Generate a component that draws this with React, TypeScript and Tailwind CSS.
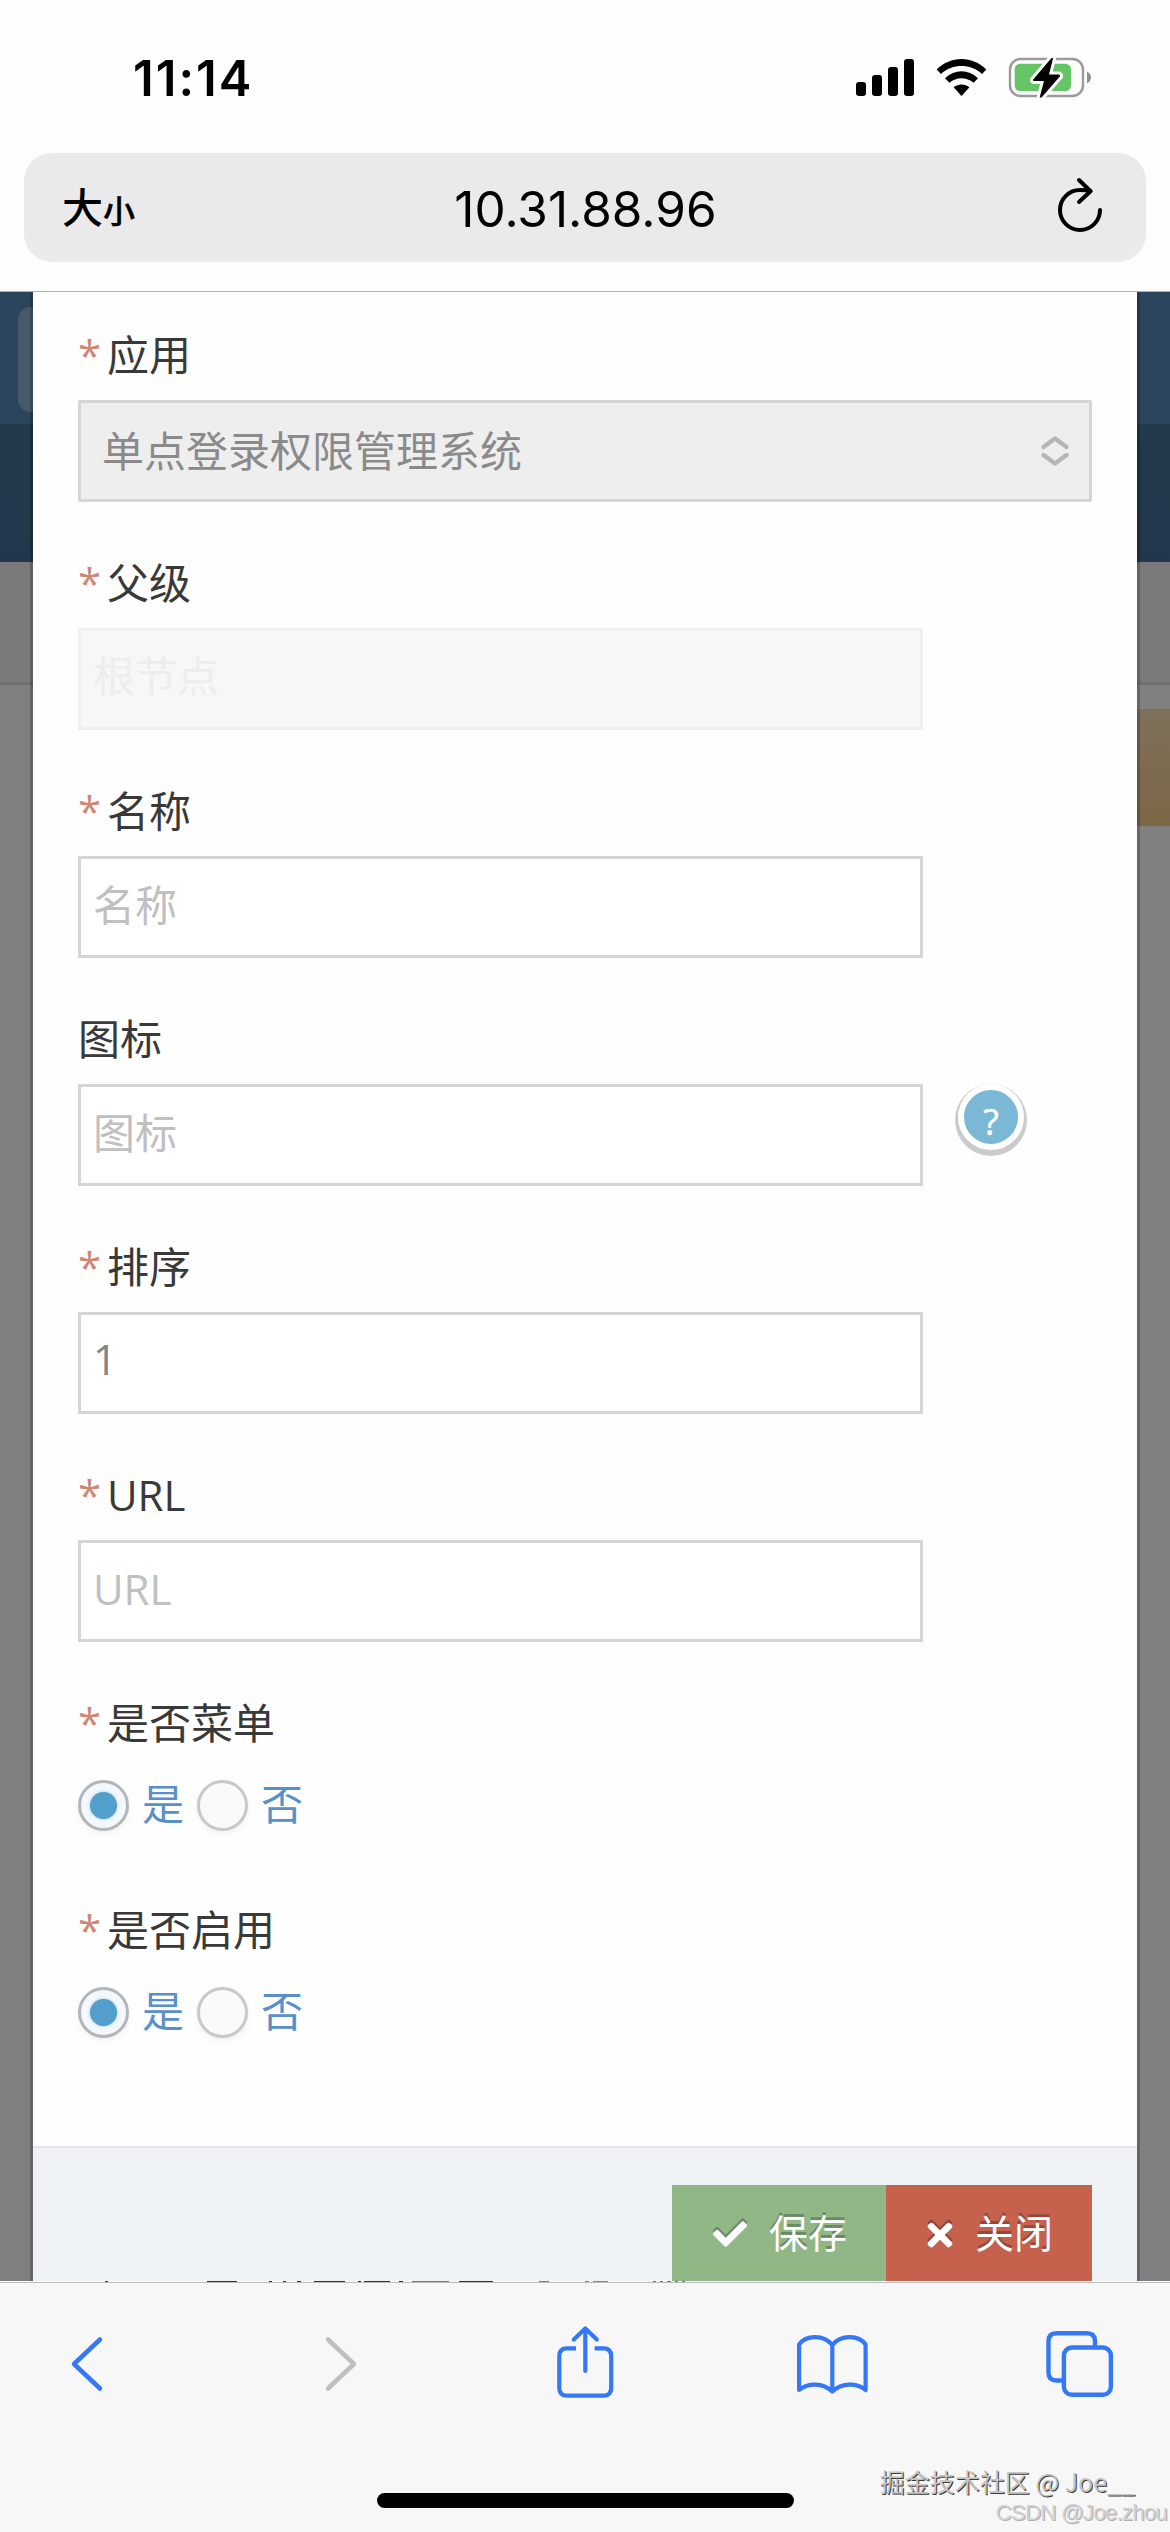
import type { ReactNode } from "react";
import { FaCheck, FaTimes } from "react-icons/fa";

function StatusBar() {
  return (
    <div className="flex h-[153px] shrink-0 items-start justify-between pt-[49px] pr-[78px] pl-[133px]">
      <span className="font-['Inter',sans-serif] text-[49px] leading-[60px] font-semibold tracking-[2px] text-black">
        11:14
      </span>
      <svg width="240" height="48" viewBox="852 54 240 48" className="mt-[5px] block">
        {/* signal */}
        <rect x="856" y="82" width="10" height="14" rx="3" />
        <rect x="872" y="75" width="10" height="21" rx="3" />
        <rect x="888" y="67" width="10" height="29" rx="3" />
        <rect x="904" y="59" width="10" height="37" rx="3" />
        {/* wifi */}
        <path d="M936.7 69.6C950.5 55.6 972.5 55.6 986.3 69.6L982 74C970.5 63.4 952.5 63.4 941 74Z" />
        <path d="M945 78.2C954.5 69 968.5 69 978 78.2L973.6 82.8C966.5 76.6 956.5 76.6 949.4 82.8Z" />
        <path d="M953.6 87.2C958 83.6 965 83.6 969.4 87.2L961.5 96Z" />
        {/* battery */}
        <rect x="1010" y="59" width="73" height="37" rx="10.5" fill="none" stroke="#9b9b9b" strokeWidth="2.4" />
        <path d="M1087 71.5C1092.3 74 1092.3 81 1087 83.5Z" fill="#8f8f8f" />
        <rect x="1014.7" y="63.7" width="56.3" height="27.3" rx="5.5" fill="#65c466" />
        <path
          d="M1051.5 58L1033 79.7Q1032.5 81 1034.5 81H1044L1039.7 97.2Q1040.5 98 1042 97L1060 76.3Q1060.3 74.6 1058.5 74.5H1049L1053 58.5Q1052.6 57.4 1051.5 58Z"
          fill="#000"
          stroke="#fdfdfd"
          strokeWidth="6"
          paintOrder="stroke"
        />
      </svg>
    </div>
  );
}

function AddressBar() {
  return (
    <div className="mx-[24px] flex h-[109px] shrink-0 items-center justify-between rounded-[28px] bg-[#eaeaea] pr-[42px] pl-[38px] text-black">
      <span className="flex w-[125px] items-baseline pb-[2px] font-['Noto_Sans_CJK_SC',sans-serif] font-medium">
        <span className="text-[41px] leading-[60px]">大</span>
        <span className="text-[32px] leading-[60px] [-webkit-text-stroke:0.4px_#000]">小</span>
      </span>
      <span className="pt-[2px] font-['Inter',sans-serif] text-[49.5px] leading-[60px]">10.31.88.96</span>
      <span className="flex w-[120px] justify-end pb-[3px]">
        <svg width="50" height="60" viewBox="1054 176 50 60" fill="none" stroke="#000" strokeWidth="4" strokeLinecap="round" strokeLinejoin="round">
          <path d="M1100 210A20 20 0 1 1 1080 190Q1086 190 1090.5 191" />
          <path d="M1079 180L1090.5 191.2L1079 202" />
        </svg>
      </span>
    </div>
  );
}

function Label({ text, required = true }: { text: string; required?: boolean }) {
  return (
    <div className="flex h-[60px] items-center text-[42px] leading-[60px] text-[#393939]">
      {required && <span className="w-[29px] text-[#cc8775]">*</span>}
      <span>{text}</span>
    </div>
  );
}

type FieldProps = {
  label: string;
  text: string;
  required?: boolean;
  box?: string;
  extra?: ReactNode;
};

function Field({ label, text, required, box = "border-[#d5d5d5] bg-white pb-[4px] text-[#c0c0c0]", extra }: FieldProps) {
  return (
    <div className="mb-[51px]">
      <Label text={label} required={required} />
      <div className="mt-[15px] flex items-start">
        <div className={`flex h-[102px] w-[845px] items-center border-3 pl-[12px] text-[42px] leading-[60px] ${box}`}>
          {text}
        </div>
        {extra}
      </div>
    </div>
  );
}

function HelpButton() {
  return (
    <span className="ml-[35px] flex size-[66px] items-center justify-center rounded-full border-6 border-white bg-[#7ab8d6] pt-[9px] text-[36px] leading-none text-white shadow-[0_3px_0_3px_rgba(0,0,0,0.2)] [-webkit-text-stroke:0.5px_#fff]">
      ?
    </span>
  );
}

function Radio({ text, checked = false }: { text: string; checked?: boolean }) {
  return (
    <div className="flex h-[51px] w-[119px] items-center">
      <span
        className={`flex size-[51px] items-center justify-center rounded-full border-3 shadow-[0_3px_6px_rgba(0,0,0,0.05)] ${
          checked ? "border-[#b2b6b9] bg-[#f3f8fc]" : "border-[#c8c8c8] bg-[#fafafa]"
        }`}
      >
        {checked && <span className="size-[27px] rounded-full bg-[#519fca] shadow-[0_0_3px_#8cc4e2]" />}
      </span>
      <span className="ml-[13px] pb-[5px] text-[42px] leading-[51px] text-[#5a90c8]">{text}</span>
    </div>
  );
}

function RadioField({ label }: { label: string }) {
  return (
    <div className="mb-[69px]">
      <Label text={label} />
      <div className="mt-[27px] flex">
        <Radio text="是" checked />
        <Radio text="否" />
      </div>
    </div>
  );
}

// Dimmed page that stays visible on both sides of the dialog
function Backdrop({ side }: { side: "left" | "right" }) {
  const left = side === "left";
  return (
    <div className="flex w-[33px] flex-col overflow-hidden bg-[#808080]">
      <div className={`h-[132px] shrink-0 bg-[#2b465c] ${left ? "pt-[15px] pl-[18px]" : ""}`}>
        {left && <div className="h-[105px] rounded-l-[13px] bg-[#465a6b]" />}
      </div>
      <div className="h-[138px] shrink-0 bg-linear-to-b from-[#223a4a] to-[#22374d]" />
      <div className="h-[123px] shrink-0 border-b-3 border-[#707070] bg-[#7a7a7a]" />
      {!left && <div className="mt-[24px] h-[117px] shrink-0 bg-linear-to-b from-[#7e705b] to-[#7c6746]" />}
    </div>
  );
}

function ModalForm() {
  return (
    <div className="relative flex flex-1 flex-col bg-[#fefefe] shadow-[0_0_0_3px_rgba(0,0,0,0.2)]">
      <div className="flex h-[1854px] flex-col pt-[33px] pl-[45px]">
        <div className="mb-[51px]">
          <Label text="应用" />
          <div className="mt-[15px] flex h-[102px] w-[1014px] items-center justify-between rounded-[2px] border-3 border-[#d5d5d5] bg-[#eee] pr-[19px] pl-[21px] text-[42px] leading-[60px] text-[#8a8a8a]">
            单点登录权限管理系统
            <svg width="30" height="34" viewBox="0 0 30 34" fill="none" stroke="#b5b5b5" strokeWidth="4.4" strokeLinecap="round" strokeLinejoin="round">
              <path d="M3.5 13L15 4.5L26.5 13M3.5 21L15 29.5L26.5 21" />
            </svg>
          </div>
        </div>
        <Field label="父级" text="根节点" box="border-[#f0f0f0] bg-[#f7f7f7] pb-[6px] text-[#ededed]" />
        <Field label="名称" text="名称" />
        <Field label="图标" text="图标" required={false} extra={<HelpButton />} />
        <Field label="排序" text="1" box="border-[#d5d5d5] bg-white pb-[8px] text-[#858585]" />
        <Field label="URL" text="URL" />
        <RadioField label="是否菜单" />
        <RadioField label="是否启用" />
      </div>
      <div className="flex flex-1 justify-end border-t-2 border-[#e4e7ea] bg-[#eff3f6] pt-[37px] pr-[45px] text-[39px] text-white [text-shadow:0_-3px_0_rgba(0,0,0,0.25)]">
        <div className="flex w-[214px] bg-[#91b787] pt-[18px] pl-[41px] leading-[60px]">
          <FaCheck className="mt-[14px] size-[34px] drop-shadow-[0_-3px_0_rgba(0,0,0,0.25)]" />
          <span className="ml-[22px]">保存</span>
        </div>
        <div className="flex w-[206px] bg-[#c5614d] pt-[18px] pl-[36px] leading-[60px]">
          <FaTimes className="mt-[14px] size-[36px] drop-shadow-[0_-3px_0_rgba(0,0,0,0.25)]" />
          <span className="ml-[17px]">关闭</span>
        </div>
      </div>
    </div>
  );
}

// Top edge of the pager row hidden behind the browser toolbar
function ClippedRow() {
  return (
    <svg width="1170" height="1" viewBox="0 0 1170 1" className="block shrink-0" shapeRendering="crispEdges">
      <path d="M105 .5h3M207 .5h30M269 .5h3M283 .5h3M297 .5h4M314 .5h31M358 .5h3M364 .5h26M399 .5h4M459 .5h34" stroke="#333" />
      <path d="M412 .5h37" stroke="#777" />
      <path d="M539 .5h10" stroke="#5c84c0" />
      <path d="M585 .5h4M593 .5h15" stroke="#69a54b" />
      <path d="M653 .5h3M660 .5h3M667 .5h4M675 .5h3M682 .5h3" stroke="#d05560" />
    </svg>
  );
}

function BottomBar() {
  return (
    <div className="relative flex h-[250px] shrink-0 flex-col items-center border-t border-[#b9bcbe] bg-[#f7f7f7]">
      <div className="flex h-[162px] w-full items-center pl-[69px]">
        <svg width="36" height="60" viewBox="69 2334 36 60" fill="none" stroke="#3478f6" strokeWidth="4.5" strokeLinecap="round" strokeLinejoin="round">
          <path d="M100 2339.5L74 2364L100 2388.5" />
        </svg>
        <svg width="36" height="60" viewBox="323 2334 36 60" fill="none" stroke="#bfbfbf" strokeWidth="4.5" strokeLinecap="round" strokeLinejoin="round" className="ml-[218px]">
          <path d="M328 2339.5L354 2364L328 2388.5" />
        </svg>
        <svg width="64" height="80" viewBox="553 2324 64 80" fill="none" stroke="#3478f6" strokeWidth="4.2" strokeLinecap="round" strokeLinejoin="round" className="ml-[194px]">
          <path d="M576 2348.3H567Q559.3 2348.3 559.3 2356V2388Q559.3 2395.7 567 2395.7H603.5Q611.2 2395.7 611.2 2388V2356Q611.2 2348.3 603.5 2348.3H594.6" strokeLinecap="butt" />
          <path d="M585.3 2371V2328.5M573.8 2339.5L585.3 2328.5L596.8 2339.5" />
        </svg>
        <svg width="80" height="80" viewBox="793 2324 80 80" fill="none" stroke="#3478f6" strokeWidth="4.2" strokeLinecap="round" strokeLinejoin="round" className="ml-[176px]">
          <path d="M832.3 2345C824 2334.5 806 2334.5 799.1 2344.5V2390C808 2382.5 823 2382.5 832.3 2391.5C841.6 2382.5 857 2382.5 865.6 2390V2344.5C858.6 2334.5 840.6 2334.5 832.3 2345V2391.5" />
        </svg>
        <svg width="76" height="80" viewBox="1042 2324 76 80" fill="none" stroke="#3478f6" strokeWidth="4.4" className="ml-[169px]">
          <path d="M1062 2380.5H1056.5Q1048.5 2380.5 1048.5 2372.5V2341.2Q1048.5 2333.2 1056.5 2333.2H1087Q1095 2333.2 1095 2341.2V2346" />
          <rect x="1063.9" y="2347.5" width="47" height="47.3" rx="8" />
        </svg>
      </div>
      <div className="mt-[48px] h-[15px] w-[417px] rounded-full bg-black" />
      <div className="absolute top-[179px] right-[35px] font-['Noto_Sans_CJK_SC',sans-serif] text-[25px] leading-[38px] whitespace-nowrap text-[#c4c4c4] [text-shadow:1px_1px_0_#3a3a3a]">
        掘金技术社区 @ Joe__
      </div>
      <div className="absolute top-[215px] right-[3px] font-['Liberation_Sans',sans-serif] text-[22.5px] leading-[30px] tracking-[-0.9px] whitespace-nowrap text-[#d2d2d2] [text-shadow:1px_1px_0_#b0b0b0]">
        CSDN @Joe.zhou
      </div>
    </div>
  );
}

export default function App() {
  return (
    <div className="flex h-[2532px] w-[1170px] flex-col overflow-hidden bg-[#fdfdfd] font-['Open_Sans','Noto_Sans_CJK_SC',sans-serif]">
      <StatusBar />
      <AddressBar />
      <div className="h-[30px] shrink-0 border-b border-[#aeb1b3]" />
      <div className="flex min-h-0 flex-1 overflow-hidden">
        <Backdrop side="left" />
        <ModalForm />
        <Backdrop side="right" />
      </div>
      <ClippedRow />
      <BottomBar />
    </div>
  );
}
